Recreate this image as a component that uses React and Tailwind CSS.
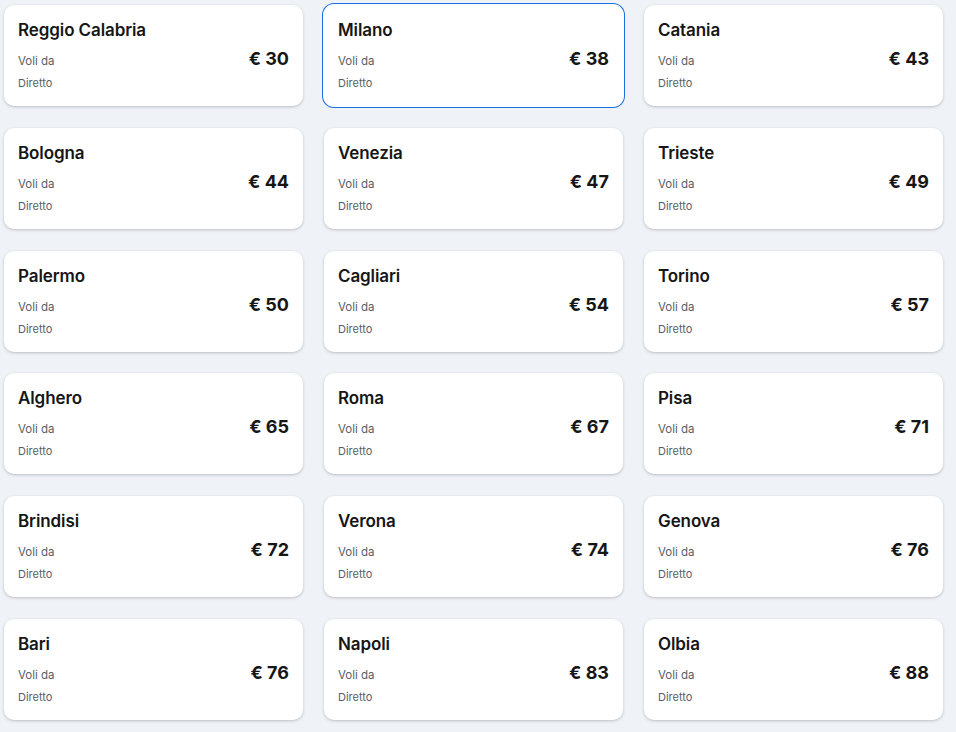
const cities = [
  { name: 'Reggio Calabria', price: 30 },
  { name: 'Milano', price: 38, active: true },
  { name: 'Catania', price: 43 },
  { name: 'Bologna', price: 44 },
  { name: 'Venezia', price: 47 },
  { name: 'Trieste', price: 49 },
  { name: 'Palermo', price: 50 },
  { name: 'Cagliari', price: 54 },
  { name: 'Torino', price: 57 },
  { name: 'Alghero', price: 65 },
  { name: 'Roma', price: 67 },
  { name: 'Pisa', price: 71 },
  { name: 'Brindisi', price: 72 },
  { name: 'Verona', price: 74 },
  { name: 'Genova', price: 76 },
  { name: 'Bari', price: 76 },
  { name: 'Napoli', price: 83 },
  { name: 'Olbia', price: 88 },
];

const CityCard = ({ city }) => (
  <div
    className={
      city.active
        ? 'h-[101px] rounded-[10px] bg-white px-[14px] pt-[14px] shadow-[0_0_0_1px_#ffffff,0_0_0_2px_#1a6fe3]'
        : 'h-[101px] rounded-[10px] bg-white px-[14px] pt-[14px] shadow-[0_1px_3px_rgba(37,32,31,0.25)]'
    }
  >
    <div className="text-[17px] leading-[22px] font-semibold text-[#161616] tracking-[-0.1px]">
      {city.name}
    </div>
    <div className="mt-[6px] flex items-baseline justify-between">
      <span className="text-[11.5px] text-[#5a5e66]">Voli da</span>
      <span className="text-[18px] leading-[24px] font-bold text-[#161616]">€ {city.price}</span>
    </div>
    <div className="mt-[4px] text-[11px] leading-[16px] text-[#5a5e66]">Diretto</div>
  </div>
);

export default function App() {
  return (
    <div
      className="min-h-screen bg-[#eff3f8] pl-[4px] pt-[5px]"
      style={{ fontFamily: 'Inter, "Noto Sans", sans-serif' }}
    >
      <div className="grid grid-cols-[299px_299px_299px] gap-x-[21px] gap-y-[21.8px]">
        {cities.map((city) => (
          <CityCard key={city.name} city={city} />
        ))}
      </div>
    </div>
  );
}
